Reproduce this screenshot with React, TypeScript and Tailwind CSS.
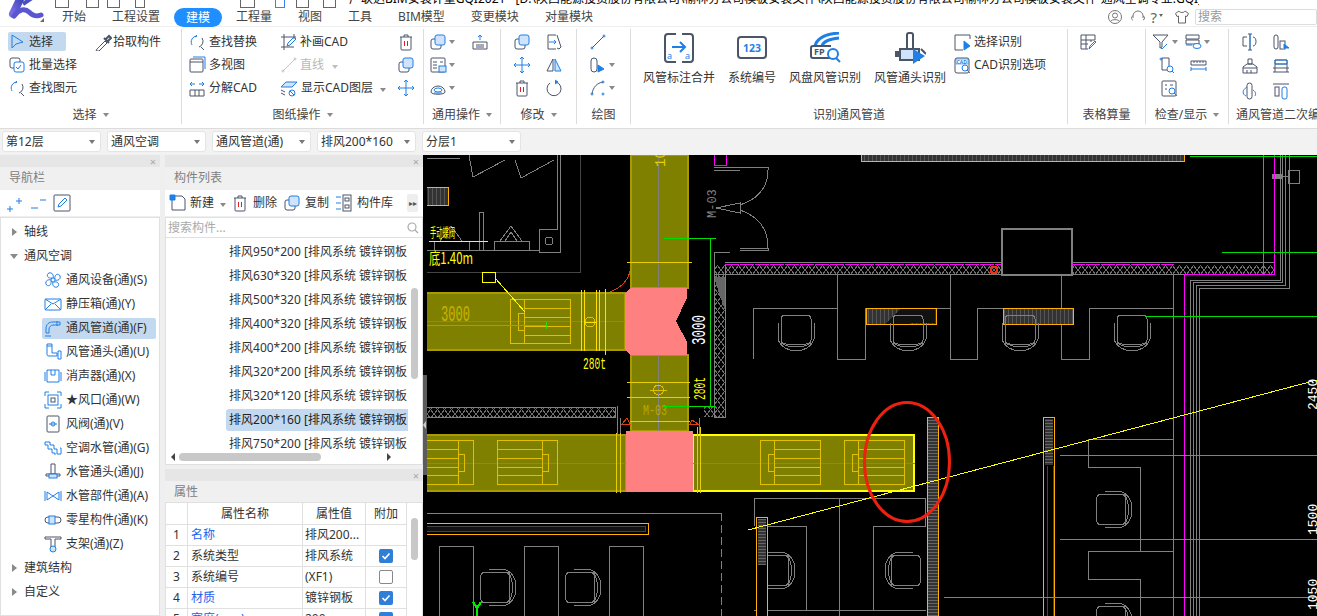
import { type ReactNode } from 'react'

const D = '#4a5568'
const B = '#1e7fe6'
const L = '#cfe3fb'

const icons: Record<string, ReactNode> = {
  select: <path d="M4 2v13l4-4 7-2z" stroke={B} />,
  pick: <><path d="M3 16l8-8 2 2-8 8-3 0z" stroke={D} /><path d="M10 5l5 5M12 6l3-3 2 2-3 3" stroke={D} strokeWidth="2" /><path d="M3 16l3-3" stroke={B} /></>,
  batch: <><rect x="2" y="2" width="10" height="10" rx="2" stroke={D} /><rect x="6" y="6" width="10" height="10" rx="2" stroke={B} fill="#fff" /><path d="M8 11l2 2 3-4" stroke={B} /></>,
  find: <><path d="M4 12a6 6 0 0 1 5-9l-1-1M9 3l-2 1" stroke={B} /><path d="M14 5a6 6 0 0 1-3 9" stroke={D} /><path d="M13 14l3 3" stroke={D} /></>,
  patch: <><path d="M4 1v16M1 4h15M14 14H1M14 1v5" stroke={D} /><path d="M7 13l1-3 6-6 2 2-6 6z" stroke={B} /></>,
  trash: <><path d="M3 4h12M7 4V2h4v2M4 4v12a1 1 0 0 0 1 1h8a1 1 0 0 0 1-1V4" stroke={D} /><path d="M7.500 8v5M10.500 8v5" stroke="#e02020" /></>,
  line: <><path d="M3 15L15 3" stroke="#c4c4c4" /><circle cx="3" cy="15" r="1" stroke="#c4c4c4" /><circle cx="15" cy="3" r="1" stroke="#c4c4c4" /></>,
  copy: <><rect x="2" y="6" width="10" height="10" rx="2" stroke={D} /><rect x="6" y="2" width="10" height="10" rx="2" stroke={B} fill={L} /></>,
  view: <><rect x="2" y="3" width="13" height="13" rx="1" stroke={D} /><path d="M2 6h13" stroke={D} /><path d="M5 1h12v12" stroke={B} /></>,
  explode: <><path d="M2 11h14v6H2zM7 11v6M11 11v6" stroke={D} /><path d="M7 5H2M2 5l2-2M2 5l2 2M11 5h5M16 5l-2-2M16 5l-2 2" stroke={B} /></>,
  layers: <><path d="M1 8l5-5h11l-5 5z" stroke={B} fill={L} /><path d="M1 11l4 2M1 14l4 2" stroke={D} /><circle cx="12" cy="14" r="3" stroke={B} /><path d="M10 12l4 4" stroke={B} /></>,
  move: <path d="M9 1v16M1 9h16M7 3l2-2 2 2M7 15l2 2 2-2M3 7L1 9l2 2M15 7l2 2-2 2" stroke={B} />,
  form: <><rect x="2" y="2" width="14" height="14" rx="1" stroke={D} /><path d="M4 6h4M4 9h4M4 12h4M11 6h3" stroke={D} /><rect x="10" y="10" width="7" height="6" stroke={B} fill={L} /></>,
  cloud: <><path d="M2 13a7 6 0 0 1 14 0c0 3-14 3-14 0z" stroke={D} /><ellipse cx="9" cy="11" rx="4" ry="2" stroke={B} /><path d="M5 14h8" stroke={B} /></>,
  upload: <><path d="M2 9h14v7H2zM5 12h8M5 14h8" stroke={D} /><path d="M9 7V2M7 4l2-2 2 2" stroke={B} /></>,
  extend: <><path d="M11 2H3v14h8" stroke={D} /><path d="M12 2l4 12-2 2-2-1" stroke={D} /><path d="M4 9h7M9 7l2 2-2 2" stroke={B} /></>,
  mirror: <><path d="M8 3v12H2z" stroke={D} /><path d="M10 3v12h6z" stroke={B} fill={L} /></>,
  rotate: <><path d="M5 4a7 7 0 1 0 6-1" stroke={D} /><path d="M10 1l3 2-3 2" fill={B} stroke={B} /></>,
  segment: <><path d="M3 15L15 3" stroke={D} /><circle cx="3" cy="15" r="1" stroke={B} /><circle cx="15" cy="3" r="1" stroke={B} /></>,
  rectTool: <><rect x="2" y="2" width="6" height="14" rx="3" stroke={D} /><path d="M9 9l6 4-6 3z" fill={B} stroke={B} /></>,
  arc: <><path d="M3 15C4 8 8 4 14 3" stroke={D} /><circle cx="3" cy="15" r="1" stroke={B} /><circle cx="14" cy="3" r="1" stroke={B} /><circle cx="14" cy="15" r="1" stroke={B} /></>,
  pickArea: <><path d="M17 6V2H2v15h8" stroke={D} /><path d="M11 8v9l6-4z" fill={B} stroke={B} /></>,
  cadOpt: <><rect x="2" y="2" width="14" height="15" rx="2" stroke={D} /><rect x="3" y="3" width="12" height="5" fill="#fff" stroke={B} strokeWidth=".6" /><text x="3.500" y="7.500" fontSize="5" fill={B} stroke="none" fontWeight="700">CAD</text><circle cx="12" cy="12" r="3" stroke={B} fill="#fff" /><path d="M14 14l3 3" stroke={B} /></>,
  table: <><path d="M2 2h14v5H2zM2 7v9h7M7 2v14M2 11h7M12 7v2" stroke={D} /><path d="M10 16l1-3 5-5 1 1-5 5z" stroke={B} /></>,
  filter: <><path d="M1 2h15l-6 7v5l-2 1V9z" stroke={D} /><path d="M8 14l2 2 5-5" stroke={B} /></>,
  eye: <><path d="M2 2h13v4H2zM2 7h13v4H2z" stroke={D} /><path d="M2 12h6" stroke={B} /><ellipse cx="13" cy="13" rx="4" ry="2.500" stroke={B} fill="#fff" /></>,
  pathFind: <><path d="M4 2h7v12H4z" stroke={D} /><circle cx="3" cy="3" r="1" stroke={B} /><circle cx="12" cy="13" r="3" stroke={B} fill="#fff" /><path d="M14 15l2 2" stroke={B} /></>,
  ruler: <><path d="M2 5h15v4H2z" stroke={D} /><path d="M5 5v2M8 5v2M11 5v2M14 5v2" stroke={D} /><path d="M2 13h15M2 11v4M17 11v4" stroke={B} /></>,
  dataFind: <><rect x="2" y="2" width="14" height="15" rx="1" stroke={D} /><path d="M5 6h2M10 6h3M5 10h2" stroke={D} /><circle cx="12" cy="12" r="3" stroke={B} fill="#fff" /><path d="M14 14l3 3" stroke={B} /></>,
  split: <><path d="M6 4H2v9h4M12 4c4 0 4 9 0 9M9 1v16M7 1h4M7 17h4" stroke={D} /><path d="M9 1v16" stroke={B} /></>,
  tall: <><rect x="2" y="2" width="4" height="14" rx="2" stroke={D} /><rect x="8" y="8" width="5" height="8" stroke={D} /><path d="M12 11l5 4h-5z" fill={B} stroke={B} /></>,
  brush: <><path d="M7 2h4v5H7zM2 10l4-3h6l4 3v6H2zM2 11h14M6 16v-3M10 16v-3" stroke={D} /></>,
  bench: <><path d="M3 3h12v4H3zM3 15V7M15 15V7M1 15h16M1 11h16" stroke={D} /><path d="M3 3h12v4H3z" stroke={B} /></>,
  pipe: <><rect x="6" y="1" width="5" height="16" rx="2.500" stroke={D} /><path d="M6 5C1 8 1 12 5 14" stroke={B} /><path d="M12 8c3 2 3 4 2 6" stroke={B} /></>,
  pillar: <><path d="M1 2h16" stroke={D} /><rect x="3" y="5" width="4" height="9" stroke={D} /><rect x="10" y="5" width="5" height="12" rx="2" stroke={B} /></>,
  fan: <><circle cx="9" cy="9" r="2" stroke={B} /><path d="M8 7C3 8 2 3 5 2s5 2 4 5M11 8c-1-5 4-6 5-3s-2 5-5 4M10 11c5-1 6 4 3 5s-5-2-4-5M7 10c1 5-4 6-5 3s2-5 5-4" stroke={B} /></>,
  box: <><rect x="1" y="4" width="16" height="11" rx="1" stroke={B} /><path d="M1 4l8 5 8-5M1 15l6-6M17 15l-6-6" stroke={B} /></>,
  duct: <><path d="M2 14v-4c0-5 3-7 7-7h7v3H9c-2 0-4 2-4 4v4zM1 17h6M13 2v5" stroke={B} /></>,
  elbow: <><path d="M3 1h5v9h5v3H5c-2 0-2-1-2-2zM3 3h5M14 8h3v8h-3z" stroke={B} /></>,
  silencer: <><path d="M1 5v9M17 5v9M3 3h12v12H3zM7 3v5h4V3" stroke={B} /></>,
  outlet: <><path d="M1 5V1h4M13 1h4v4M17 13v4h-4M5 17H1v-4" stroke={B} /><rect x="4" y="4" width="10" height="10" stroke={B} /><rect x="7" y="7" width="4" height="4" stroke={D} /></>,
  valve: <><rect x="3" y="1" width="12" height="16" rx="1" stroke={D} /><path d="M5 9h8" stroke={B} /><circle cx="9" cy="9" r="2" stroke={B} /></>,
  water: <path d="M1 3h5v3h4v4h3v5h4V9h-1M1 3v3h3v4h4v4h3v2" stroke={B} />,
  tee: <><path d="M7 1h4v10H7z" stroke={D} /><path d="M2 11h14v2H2z" stroke={D} /><rect x="5" y="11" width="8" height="4" fill={L} stroke={B} /></>,
  valve2: <><path d="M1 4v10M17 4v10M3 5l12 8V5L3 13z" stroke={B} /></>,
  misc: <><rect x="1" y="6" width="16" height="6" rx="3" stroke={D} /><rect x="5" y="5" width="6" height="8" fill={L} stroke={B} /></>,
  stand: <><path d="M1 2h16M1 2v2h6v8M17 2v2h-6v8" stroke={D} /><circle cx="9" cy="14" r="3" fill={L} stroke={B} /></>,
  plus: <><path d="M2 15h6M5 12v6" stroke={B} /><path d="M11 7h6M14 4v6" stroke={B} /></>,
  minus: <><path d="M2 14h7M11 6h6" stroke={B} /></>,
  edit: <><rect x="1" y="1" width="16" height="16" rx="1" stroke={D} /><path d="M5 13l1-3 6-6 2 2-6 6z" stroke={B} /></>,
  newFile: <><path d="M3 6v10h13V5l-3-3H6" stroke={D} /><path d="M1 1h5v5H1z" fill={B} stroke={B} /></>,
  library: <><rect x="8" y="1" width="8" height="16" stroke={D} /><rect x="10" y="4" width="4" height="3" stroke={D} /><rect x="10" y="11" width="4" height="3" stroke={D} /><path d="M1 3h5M1 9h5M1 15h5" stroke={B} /></>,
}

function Ic({ n }: { n: string }) {
  return (
    <svg width="18" height="18" viewBox="0 0 18 18" fill="none" strokeWidth="1" className="shrink-0">
      {icons[n]}
    </svg>
  )
}

function Caret({ light }: { light?: boolean }) {
  return (
    <span
      className={`inline-block h-0 w-0 border-x-[3.500px] border-t-[4px] border-x-transparent ${light ? 'border-t-[#c0c0c0]' : 'border-t-[#8a8a8a]'}`}
    />
  )
}

function Group({ w, label, caret, children }: { w: string; label: string; caret?: boolean; children: ReactNode }) {
  return (
    <div className={`flex h-[95px] shrink-0 flex-col overflow-hidden border-r border-[#dcdcdc] ${w}`}>
      <div className="h-[75px] pt-px">{children}</div>
      <div className="flex h-5 items-center justify-center gap-[6px] whitespace-nowrap pt-[2px] text-[#444]">
        {label}
        {caret && <Caret />}
      </div>
    </div>
  )
}

function Tool({ n, t, gap = 'gap-[3px]' }: { n: string; t: string; gap?: string }) {
  return (
    <div className={`flex h-[23px] items-center whitespace-nowrap ${gap}`}>
      <Ic n={n} />
      <span>{t}</span>
    </div>
  )
}

function Only({ n, caret }: { n: string; caret?: boolean }) {
  return (
    <div className="flex h-[23px] items-center gap-[2px]">
      <Ic n={n} />
      {caret && <Caret />}
    </div>
  )
}

function Big({ w, t, children }: { w: string; t: string; children: ReactNode }) {
  return (
    <div className={`flex flex-col items-center whitespace-nowrap ${w}`}>
      <svg width="32" height="32" viewBox="0 0 32 32" fill="none" className="mt-[2px]">
        {children}
      </svg>
      <span className="mt-[6px] leading-4">{t}</span>
    </div>
  )
}

function PanelHead({ t }: { t: string }) {
  return (
    <>
      <div className="flex h-3 items-center justify-end bg-[#e6e6e6] pr-[4px] text-[11px] leading-none text-[#a8a8a8]">×</div>
      <div className="flex h-[22px] items-center bg-[#f0f0f0] pl-[9px] text-[#808080]">{t}</div>
    </>
  )
}

const navItems = [
  ['fan', '通风设备(通)(S)'],
  ['box', '静压箱(通)(Y)'],
  ['duct', '通风管道(通)(F)'],
  ['elbow', '风管通头(通)(U)'],
  ['silencer', '消声器(通)(X)'],
  ['outlet', '★风口(通)(W)'],
  ['valve', '风阀(通)(V)'],
  ['water', '空调水管(通)(G)'],
  ['tee', '水管通头(通)(J)'],
  ['valve2', '水管部件(通)(A)'],
  ['misc', '零星构件(通)(K)'],
  ['stand', '支架(通)(Z)'],
]

const listRows = ['950*200', '630*320', '500*320', '400*320', '400*200', '320*200', '320*120', '200*160', '750*200']

const propRows = [
  ['1', '名称', '排风200...', '', true],
  ['2', '系统类型', '排风系统', 'on', false],
  ['3', '系统编号', '(XF1)', 'off', false],
  ['4', '材质', '镀锌钢板', 'on', true],
  ['5', '宽度(mm)', '200', 'on', true],
] as const

function TreeHead({ t, open }: { t: string; open?: boolean }) {
  return (
    <div className="flex h-6 items-center pl-[9px]">
      <span className="flex w-2 justify-center">
        {open ? (
          <span className="h-0 w-0 border-x-[4px] border-t-[5px] border-x-transparent border-t-[#8a8a8a]" />
        ) : (
          <span className="h-0 w-0 border-y-[4px] border-l-[5px] border-y-transparent border-l-[#8a8a8a]" />
        )}
      </span>
      <span className="ml-[6px]">{t}</span>
    </div>
  )
}

function Check({ on }: { on: boolean }) {
  return on ? (
    <span className="flex h-[14px] w-[14px] items-center justify-center rounded-[2px] bg-[#2f7fd8]">
      <svg width="10" height="10" viewBox="0 0 10 10" fill="none" stroke="#fff" strokeWidth="1.600">
        <path d="M1.500 5l2.500 2.500 4.500-5" />
      </svg>
    </span>
  ) : (
    <span className="h-[14px] w-[14px] rounded-[2px] border border-[#888] bg-white" />
  )
}

function Vent({ x, flip }: { x: number; flip?: boolean }) {
  // 风口 symbol, 60 wide, sits on the lower duct run
  const inner = flip ? x + 45 : x + 14
  const box = flip ? x + 45 : x + 8
  return (
    <g stroke="#e0c000" fill="none">
      <rect x={x} y={440} width={60} height={44} />
      <path d={`M${inner} 440V484`} />
      <rect x={box} y={454} width={6} height={17} />
      {[449, 458, 467, 475].map((y) => (
        <path key={y} d={flip ? `M${x} ${y}H${x + 45}` : `M${x + 14} ${y}H${x + 60}`} />
      ))}
    </g>
  )
}

function Chair({ x, y, r = 0 }: { x: number; y: number; r?: number }) {
  return (
    <g transform={`translate(${x} ${y}) rotate(${r} 18 17.500)`} stroke="#808080" fill="none">
      <path d="M3 4Q3 0 8 0H28Q33 0 33 4V25Q33 29 28 29H8Q3 29 3 25Z" />
      <path d="M0 8V24Q2 32 12 35H24Q34 32 36 24V8M3 28Q10 32 18 32T33 28" />
    </g>
  )
}

function Canvas() {
  const grey = '#808080'
  const ol = '#808000'
  const rim = '#a89a00'
  return (
    <svg viewBox="427 155 890 461" width="890" height="461" className="block bg-black" shapeRendering="crispEdges" fontFamily="'Liberation Mono', monospace">
      <defs>
        <pattern id="wall" width="7" height="9" patternUnits="userSpaceOnUse">
          <path d="M0 0L3.500 4.500L7 0M0 9L3.500 4.500L7 9" stroke="#6e6e6e" fill="none" />
        </pattern>
        <pattern id="hatch" width="4" height="4" patternUnits="userSpaceOnUse">
          <rect width="4" height="4" fill="#333" />
          <path d="M0 0V4" stroke="#555" />
        </pattern>
        <pattern id="hatchH" width="4" height="3" patternUnits="userSpaceOnUse">
          <rect width="4" height="3" fill="#333" />
          <path d="M0 0H4" stroke="#666" />
        </pattern>
      </defs>

      {/* upper left room */}
      <g stroke={grey} fill="none">
        <path d="M423 158H460M469 155L473 177L505 160M515 160L521 178L554 160" />
        <path d="M560 155V252H539V229H557V155M423 250H539M479 250V212H483V250" />
        <circle cx="549" cy="241" r="4" />
        <path d="M494 250V241H529V250M500 241L511 226L522 241M505 241L511 232L517 241M434 250V241H469V250M440 241L451 226L462 241" />
        <path d="M580 155V272H423" stroke="#444" />
      </g>
      <rect x="420" y="187" width="28" height="18" fill="url(#hatch)" stroke="#ffb000" />
      <path d="M429 241H488" stroke="#ffff00" />
      <text x="430" y="237" fontSize="13" fill="#ffff00" textLength="25" lengthAdjust="spacingAndGlyphs" fontFamily="'Noto Sans CJK SC', sans-serif">手动蝶阀</text>
      <text x="429" y="264" fontSize="16" fill="#ffff00" textLength="44" lengthAdjust="spacingAndGlyphs" fontFamily="'Noto Sans CJK SC', sans-serif">底1.40m</text>

      {/* door and walls */}
      <g stroke={grey} fill="none">
        <path d="M714 167H740M714 170H740M740 167H768V170C768 190 755 200 740 205M740 210C755 215 768 225 768 248V250H740M740 248H768" />
        <path d="M716 208L740 203V213Z" />
      </g>
      <text transform="translate(716 218) rotate(-90)" fontSize="12" fill={grey}>M-03</text>
      <path d="M714 155V165H726V155" stroke="#ff00ff" fill="none" />
      <rect x="714" y="265" width="287" height="9" fill="url(#wall)" />
      <rect x="1071" y="265" width="204" height="9" fill="url(#wall)" />
      <rect x="714" y="265" width="11" height="152" fill="url(#wall)" />
      <path d="M714 277H725V311Z" fill="#666" />
      <rect x="423" y="407" width="192" height="10" fill="url(#wall)" />
      <rect x="704" y="406" width="21" height="11" fill="url(#wall)" />
      <g stroke={grey} fill="none">
        <path d="M725 262H1001M1071 262H1275M714 274H1275M423 407H615V417H423M617 406V458M620 418V458M699 418V458M702 406H704M714 252H730M714 252V417H725V265" />
        <rect x="1001.500" y="228.500" width="70" height="46" strokeWidth="2" />
      </g>
      <path d="M725 264H1001M1071 264H1174" stroke="#ff00ff" strokeDasharray="14 1" />
      <circle cx="994" cy="270" r="3.500" stroke="#f03010" strokeWidth="2" fill="none" />

      {/* top hatched unit and right risers */}
      <rect x="861.500" y="150" width="323" height="11.500" fill="url(#hatch)" stroke="#ffb000" />
      <g stroke={grey} fill="none">
        <path d="M1263 155V274M1280 155V280H1190.500V616M1282.500 155V282.700H1193.500V616M1285 155V285.700H1196.500V616M1289 155V288.300H1199V616" />
        <rect x="1288.500" y="170.500" width="11" height="13" />
        <path d="M1283 176.500H1288" />
      </g>
      <rect x="1272" y="174" width="11" height="5" fill={grey} />
      <path d="M1274.500 155V274H1184.500V616" stroke="#ff00ff" fill="none" />

      {/* office desks */}
      <g stroke={grey} fill="none">
        <path d="M753 359V308H837.500V274M837.500 308V359H865.500V308H950V274M950 308V359H977V308H1061V274M1061 308V359H1089V308H1173.500V274M1173.500 308V616" />
      </g>
      <rect x="866.500" y="308.500" width="70" height="16" fill="url(#hatch)" stroke="#ffb000" />
      <path d="M885 324L900 309H935V323Z" fill="#111" />
      <rect x="1003.500" y="308.500" width="70" height="16" fill="url(#hatch)" stroke="#ffb000" />
      <Chair x={778} y={315} />
      <Chair x={890} y={315} />
      <Chair x={1002} y={315} />
      <Chair x={1114} y={315} />

      {/* lower offices */}
      <g stroke={grey} fill="none">
        <path d="M423 513H721" />
        <path d="M721 513V616" strokeDasharray="8 4" />
        <path d="M439 616V546H473V616M524 616V546H558V616M609 616V546H643V616M423 570V605" />
        <path d="M754 526V498H925.500V526H873V610M925.500 610H754M839.500 498V616M767.600 526H806V610" />
        <path d="M1173.500 439H1088.500V467H1140.500V551H1088.500V579H1140.500V616M1140.500 551H1173.500" />
      </g>
      <rect x="423" y="523.500" width="225" height="11" stroke="#ffb000" fill="none" />
      <rect x="423" y="526.500" width="222" height="5" stroke="#444" fill="#111" />
      <Chair x={480} y={570} r={270} />
      <Chair x={565} y={570} r={270} />
      <Chair x={759} y={553} r={270} />
      <Chair x={885} y={553} r={90} />
      <Chair x={1096} y={492} r={270} />
      <Chair x={1096} y={604} r={270} />
      <rect x="927.500" y="417.500" width="11" height="205" fill="url(#hatchH)" stroke="#ffb000" />
      <rect x="1043.500" y="417.500" width="11" height="205" fill="#000" stroke="#ffb000" />
      <rect x="1045" y="419" width="8" height="46" fill="url(#hatchH)" />
      <path d="M1047 466V616M1053 466V616" stroke="#444" />
      <rect x="756.500" y="517.500" width="11" height="105" fill="#000" stroke="#ffb000" />
      <rect x="758" y="519" width="8" height="46" fill="url(#hatchH)" />

      {/* ducts */}
      <rect x="631" y="155" width="57" height="133" fill={ol} stroke={rim} strokeWidth="2" />
      <rect x="631" y="355" width="57" height="76" fill={ol} stroke={rim} strokeWidth="2" />
      <rect x="420" y="293" width="205" height="57" fill={ol} stroke={rim} strokeWidth="2" />
      <rect x="420" y="435" width="206" height="56" fill={ol} stroke={rim} strokeWidth="2" />
      <rect x="693" y="435" width="221" height="56" fill={ol} stroke="#ffff00" strokeWidth="2" />
      <polygon points="631,288 687,288 687,298 676,321 687,342 687,355 631,355 625,350 625,293" fill="#ff8080" />
      <rect x="626" y="431" width="67" height="61" fill="#ff8080" />
      <path d="M658.500 155V288M658.500 355V431M423 321.500H625M423 463.500H626M693 463.500H915" stroke={grey} />
      <path d="M627 262.500H692M627 382.500H690M627 397.500H690M630 421.500H690" stroke="#e6d000" />
      <path d="M616 433V493M620 433V493M697 427V493M700 427V493" stroke="#e6d000" />

      {/* symbols on ducts */}
      <g stroke="#e0c000" fill="none">
        <rect x="510" y="299" width="60" height="44" />
        <path d="M524 299V343M524 308H570M524 317H570M524 326H570M524 335H570" />
        <rect x="518" y="313" width="6" height="17" />
        <circle cx="590" cy="322" r="5" />
      </g>
      <path d="M581 290V351M584 290V351M596 290V351M599 290V351M605 289V355M584 322H596" stroke="#ffe000" />
      <rect x="482" y="272" width="13" height="10" stroke="#ffff00" fill="none" />
      <path d="M495 278L525 312" stroke="#ffff00" />
      <Vent x={413} flip />
      <Vent x={497} flip />
      <Vent x={760} />
      <Vent x={844} />
      <g stroke="#e0c000" fill="none">
        <circle cx="658.500" cy="390" r="5" />
        <path d="M650 390H667" />
      </g>
      <path d="M423 325.500H546M546 322V329" stroke="#33dd00" />
      <text x="441" y="321" fontSize="22" fill="#c8b400" textLength="29" lengthAdjust="spacingAndGlyphs">3000</text>
      <text x="643" y="415" fontSize="14" fill="#b8a800" textLength="24" lengthAdjust="spacingAndGlyphs">M-03</text>
      <text transform="translate(665 167) rotate(-90)" fontSize="14" fill="#e6d000">10</text>

      {/* dimensions */}
      <path d="M664 238.500H716M710.500 238V407M664 406.500H715" stroke="#00dd00" />
      <text transform="translate(705 345) rotate(-90)" fontSize="20" fill="#fff" textLength="30" lengthAdjust="spacingAndGlyphs">3000</text>
      <text x="583" y="369" fontSize="16" fill="#ffff00" textLength="23" lengthAdjust="spacingAndGlyphs">280t</text>
      <text transform="translate(705 400) rotate(-90)" fontSize="16" fill="#ffff00" textLength="23" lengthAdjust="spacingAndGlyphs">280t</text>
      <path d="M610 292C620 288 628 281 630 271" stroke="#e04010" fill="none" />
      <path d="M627 418L622 424H630ZM690 424H698L692 420Z" fill="#000" stroke="#e04010" />

      <path d="M1190 156.500H1317M1222 252.500H1317M1145.600 316.500H1317M1060 455.500H1317M1060 539.500H1317M944 597.500H1317" stroke="#00dd00" />
      <path d="M748 530L1317 380" stroke="#ffff00" />
      <text transform="translate(1317 410) rotate(-90)" fontSize="13" fill="#fff">2450</text>
      <text transform="translate(1317 535) rotate(-90)" fontSize="13" fill="#fff">1500</text>
      <text transform="translate(1317 610) rotate(-90)" fontSize="13" fill="#fff">1050</text>
      <path d="M473 602L477 608L481 602M477 608V616" stroke="#00ee00" strokeWidth="2" fill="none" />
      <ellipse cx="907" cy="462" rx="42.500" ry="59.500" fill="none" stroke="#ee2010" strokeWidth="3" shapeRendering="auto" />
    </svg>
  )
}

export default function App() {
  return (
    <div className="relative flex h-[616px] w-[1317px] flex-col overflow-hidden bg-white font-['Noto_Sans','Noto_Sans_CJK_SC',sans-serif] text-[12px] text-[#333]">
      {/* clipped title bar */}
      <div className="flex h-2 items-end overflow-hidden">
        <div className="flex w-[349px] shrink-0 items-end pl-[55px]">
          <span className="mr-[17px] h-3 w-[14px] border border-[#666]" />
          <span className="mr-2 h-3 w-[13px] border border-[#666]" />
          <span className="mr-[15px] h-3 w-[13px] border border-[#666]" />
          <span className="mr-[95px] h-3 w-[10px] border border-[#666]" />
          <span className="mr-5 h-3 w-[15px] border border-[#666]" />
          <span className="mr-[11px] h-3 w-[10px] border border-[#3b82f6]" />
          <span className="mr-[14px] h-3 w-[13px] border border-[#666]" />
          <span className="h-3 w-[13px] border border-[#666]" />
        </div>
        <div className="h-2 w-[850px] overflow-hidden whitespace-nowrap leading-none text-black">
          <div className="-mt-[7px]">广联达BIM安装计量GQI2021 - [D:\陕西能源投资股份有限公司\榆林分公司模板安装文件\陕西能源投资股份有限公司榆林分公司模板安装文件-通风空调专业.GQI]</div>
        </div>
      </div>

      {/* tabs */}
      <div className="flex h-[19px] items-center border-b border-[#eee] pl-[62px] text-[#444]">
        <div className="flex gap-[26px]">
          <span>开始</span>
          <span>工程设置</span>
          <span className="-mx-[12px] h-[19px] rounded-[10px] bg-[#1f8fff] px-3 leading-[19px] text-white">建模</span>
          <span>工程量</span>
          <span>视图</span>
          <span>工具</span>
          <span>BIM模型</span>
          <span>变更模块</span>
          <span>对量模块</span>
        </div>
        <div className="ml-auto flex items-center">
          <svg width="16" height="16" viewBox="0 0 16 16" fill="none" stroke="#777">
            <circle cx="8" cy="8" r="6.500" />
            <circle cx="8" cy="6.500" r="2.500" />
            <path d="M3.500 12.500c1-2.500 8-2.500 9 0" />
          </svg>
          <svg width="16" height="16" viewBox="0 0 16 16" fill="none" stroke="#777" className="ml-[7px]">
            <path d="M3 9V7a5 5 0 0 1 10 0v2" />
            <path d="M3 7c-2 0-2 4 0 4M13 7c2 0 2 4 0 4" />
          </svg>
          <span className="ml-[4px] text-[15px] leading-none text-[#666]">?</span>
          <span className="ml-[2px] mb-1 h-0 w-0 border-x-[2px] border-t-[3px] border-x-transparent border-t-[#666]" />
          <svg width="16" height="16" viewBox="0 0 16 16" fill="none" stroke="#666" className="ml-[11px]">
            <path d="M5 2L1.500 4.500 3 7.500 4.500 7V14H11.500V7L13 7.500 14.500 4.500 11 2C10 4 6 4 5 2Z" />
          </svg>
          <div className="ml-[5px] h-4 w-[122px] rounded-[2px] border border-[#ddd] pl-[2px] leading-[14px] text-[#999]">搜索</div>
        </div>
      </div>

      {/* ribbon */}
      <div className="flex h-[101px] pt-[2px]">
        <Group w="w-[182px]" label="选择" caret>
          <div className="grid grid-cols-[94px_88px]">
            <div className="ml-2 flex h-[23px] items-center">
              <div className="flex h-[19px] w-[58px] items-center gap-[3px] rounded-[2px] bg-[#c3d9f0]">
                <Ic n="select" />
                <span>选择</span>
              </div>
            </div>
            <Tool n="pick" t="拾取构件" gap="gap-px" />
            <div className="col-span-2 pl-2"><Tool n="batch" t="批量选择" /></div>
            <div className="col-span-2 pl-2"><Tool n="find" t="查找图元" /></div>
          </div>
        </Group>
        <Group w="w-[242px]" label="图纸操作" caret>
          <div className="grid grid-cols-[92px_117px_1fr] pl-[6px]">
            <Tool n="find" t="查找替换" />
            <Tool n="patch" t="补画CAD" gap="gap-[2px]" />
            <Only n="trash" />
            <Tool n="view" t="多视图" />
            <div className="flex h-[23px] items-center gap-[2px] text-[#b8b8b8]">
              <Ic n="line" />
              <span>直线</span>
              <span className="ml-[6px]"><Caret light /></span>
            </div>
            <Only n="copy" />
            <Tool n="explode" t="分解CAD" />
            <div className="flex h-[23px] items-center gap-[3px] whitespace-nowrap">
              <Ic n="layers" />
              <span>显示CAD图层</span>
              <span className="ml-[4px]"><Caret /></span>
            </div>
            <Only n="move" />
          </div>
        </Group>
        <Group w="w-[77px]" label="通用操作" caret>
          <div className="grid grid-cols-[42px_1fr] pl-[5px]">
            <Only n="copy" caret />
            <Only n="upload" />
            <Only n="form" caret />
            <div />
            <Only n="cloud" caret />
          </div>
        </Group>
        <Group w="w-[76px]" label="修改" caret>
          <div className="grid grid-cols-[32px_1fr] pl-3">
            <Only n="copy" />
            <Only n="extend" />
            <Only n="move" />
            <Only n="mirror" />
            <Only n="trash" />
            <Only n="rotate" />
          </div>
        </Group>
        <Group w="w-[54px]" label="绘图">
          <div className="pl-3">
            <Only n="segment" />
            <Only n="rectTool" caret />
            <Only n="arc" caret />
          </div>
        </Group>
        <Group w="w-[437px]" label="识别通风管道">
          <div className="flex pl-3">
            <Big w="w-[72px]" t="风管标注合并">
              <path d="M13 2H5a3 3 0 0 0-3 3v22a3 3 0 0 0 3 3h8M19 2h8a3 3 0 0 1 3 3v22a3 3 0 0 1-3 3h-8" stroke={D} strokeWidth="2" />
              <path d="M9 15h13M17 10l5 5-5 5" stroke={B} strokeWidth="2" />
              <text x="4" y="27" fontSize="9" fill={B} fontFamily="'Noto Sans', sans-serif">a</text>
              <text x="22" y="27" fontSize="9" fill={B} fontFamily="'Noto Sans', sans-serif">a</text>
            </Big>
            <Big w="ml-[13px] w-[48px]" t="系统编号">
              <rect x="2" y="5" width="28" height="21" rx="3" stroke={D} strokeWidth="2" />
              <text x="16" y="20" fontSize="10.500" fontWeight="700" fill={B} textAnchor="middle" fontFamily="'Noto Sans', sans-serif">123</text>
            </Big>
            <Big w="ml-[13px] w-[72px]" t="风盘风管识别">
              <path d="M6 14C8 6 15 2 30 1M13 14C14 10 20 7 30 6" stroke={B} strokeWidth="3" />
              <path d="M24 26H4a2 2 0 0 1-2-2V16a2 2 0 0 1 2-2h18" stroke={D} strokeWidth="2" />
              <text x="5" y="23" fontSize="9" fontWeight="700" fill={D} fontFamily="'Noto Sans', sans-serif">FP</text>
              <circle cx="24" cy="22" r="5" stroke={B} strokeWidth="2" fill="#fff" />
              <path d="M27 26l4 4" stroke={B} strokeWidth="2" />
            </Big>
            <Big w="ml-[13px] w-[72px]" t="风管通头识别">
              <path d="M13 18V3a2 2 0 0 1 2-2h2a2 2 0 0 1 2 2v15" stroke={D} strokeWidth="2" />
              <rect x="1" y="19" width="4" height="6" fill={D} />
              <rect x="6" y="17" width="19" height="11" fill={L} stroke={D} strokeWidth="2" />
              <path d="M19 17v15l12-8z" fill={B} />
              <path d="M27 17l5 5" stroke={D} strokeWidth="2" />
            </Big>
            <div className="ml-[7px]">
              <Tool n="pickArea" t="选择识别" />
              <Tool n="cadOpt" t="CAD识别选项" />
            </div>
          </div>
        </Group>
        <Group w="w-[78px]" label="表格算量">
          <div className="pl-[11px]"><Only n="table" /></div>
        </Group>
        <Group w="w-[83px]" label="检查/显示" caret>
          <div className="pl-[6px]">
            <div className="flex">
              <div className="w-[32px]"><Only n="filter" caret /></div>
              <Only n="eye" caret />
            </div>
            <div className="flex pl-[6px]">
              <div className="w-[31px]"><Only n="pathFind" /></div>
              <Only n="ruler" />
            </div>
            <div className="pl-2"><Only n="dataFind" /></div>
          </div>
        </Group>
        <div className="flex h-[95px] w-[88px] shrink-0 flex-col overflow-hidden">
          <div className="grid h-[75px] grid-cols-[31px_1fr] pl-3 pt-px">
            <Only n="split" />
            <Only n="tall" />
            <Only n="brush" />
            <Only n="bench" />
            <Only n="pipe" />
            <Only n="pillar" />
          </div>
          <div className="flex h-5 items-center whitespace-nowrap pl-[7px] pt-[2px] text-[#444]">通风管道二次编辑</div>
        </div>
      </div>

      {/* floor selectors */}
      <div className="flex h-[27px] gap-[6px] border-t border-[#dcdcdc] bg-[#f2f2f2] pl-[2px] pt-[2px]">
        {['第12层', '通风空调', '通风管道(通)', '排风200*160', '分层1'].map((t) => (
          <div key={t} className="flex h-[21px] w-[99px] items-center justify-between rounded-[3px] border border-[#e4e4e4] bg-white pl-[3px] pr-[5px]">
            <span>{t}</span>
            <span className="h-0 w-0 border-x-[3px] border-t-[4px] border-x-transparent border-t-[#777]" />
          </div>
        ))}
      </div>

      {/* panels + canvas */}
      <div className="flex h-[461px] bg-[#efefef]">
        <div className="flex w-[160px] shrink-0 flex-col">
          <PanelHead t="导航栏" />
          <div className="mt-px flex h-[26px] items-center gap-[6px] bg-white pl-[5px]">
            <Ic n="plus" />
            <Ic n="minus" />
            <Ic n="edit" />
          </div>
          <div className="mt-px flex-1 overflow-hidden border border-[#e0e0e0] bg-white pt-[2px]">
            <TreeHead t="轴线" />
            <TreeHead t="通风空调" open />
            {navItems.map(([ic, t]) => (
              <div key={t} className="flex h-6 items-center pl-[43px]">
                <div className={`-ml-[2px] flex h-[21px] w-[114px] items-center gap-[4px] rounded-[2px] whitespace-nowrap pl-[2px] ${t.startsWith('通风管道') ? 'bg-[#c3d9f0]' : ''}`}>
                  <Ic n={ic} />
                  <span>{t}</span>
                </div>
              </div>
            ))}
            <TreeHead t="建筑结构" />
            <TreeHead t="自定义" />
          </div>
        </div>

        <div className="ml-[5px] flex w-[258px] shrink-0 flex-col">
          <PanelHead t="构件列表" />
          <div className="mt-px flex h-[26px] items-center bg-white pl-[4px] whitespace-nowrap">
            <Ic n="newFile" />
            <span className="ml-[3px]">新建</span>
            <span className="ml-[6px]"><Caret /></span>
            <span className="ml-[5px]"><Ic n="trash" /></span>
            <span className="ml-[4px]">删除</span>
            <span className="ml-[6px]"><Ic n="copy" /></span>
            <span className="ml-[4px]">复制</span>
            <span className="ml-[6px]"><Ic n="library" /></span>
            <span className="ml-[4px]">构件库</span>
            <span className="ml-[14px] flex h-[18px] w-[11px] items-center justify-center rounded-[2px] bg-[#eee] text-[8px] text-[#555]">▸▸</span>
          </div>
          <div className="mt-px flex h-5 items-center justify-between border-x border-t border-[#e0e0e0] bg-white pl-[2px] pr-[3px] text-[#aaa]">
            <span>搜索构件...</span>
            <svg width="12" height="12" viewBox="0 0 12 12" fill="none" stroke="#aaa" strokeWidth="1.200">
              <circle cx="5" cy="5" r="4" />
              <path d="M8 8l3 3" />
            </svg>
          </div>
          <div className="relative h-[228px] border border-[#e0e0e0] bg-white pl-[60px] pt-[2px]">
            {listRows.map((t) => (
              <div key={t} className={`flex h-6 w-[182px] items-center overflow-hidden whitespace-nowrap ${t === '200*160' ? 'text-[#222]' : ''}`}>
                <div className={`flex h-[22px] w-full items-center rounded-l-[3px] pl-[3px] ${t === '200*160' ? 'bg-[#c3d9f0]' : ''}`}>
                  排风{t} [排风系统 镀锌钢板
                </div>
              </div>
            ))}
            {/* scrollbars */}
            <div className="absolute left-[245px] top-[50px] h-[91px] w-[7px] rounded-[4px] bg-[#c8c8c8]" />
            <div className="absolute bottom-px left-0 flex h-[12px] w-[244px] items-center bg-white">
              <span className="ml-[5px] h-0 w-0 border-y-[4px] border-r-[4px] border-y-transparent border-r-[#444]" />
              <div className="ml-[4px] h-[8px] w-[142px] rounded-[4px] bg-[#c8c8c8]" />
              <span className="ml-auto mr-[19px] h-0 w-0 border-y-[4px] border-l-[4px] border-y-transparent border-l-[#444]" />
            </div>
          </div>

          <div className="mt-[4px] flex h-3 items-center justify-end bg-[#e6e6e6] pr-[4px] text-[11px] leading-none text-[#a8a8a8]">×</div>
          <div className="flex h-[21px] items-center bg-[#f0f0f0] pl-[9px] text-[#808080]">属性</div>
          <div className="relative flex-1 overflow-hidden border-x border-t border-[#e0e0e0] bg-white">
            <div className="grid w-[241px] grid-cols-[22px_115px_63px_41px]">
              {['', '属性名称', '属性值', '附加'].map((t, i) => (
                <div key={i} className="flex h-[22px] items-center justify-center border-b border-r border-[#e0e0e0]">{t}</div>
              ))}
              {propRows.map(([n, name, val, chk, blue]) => (
                <div key={n} className="contents">
                  <div className="flex h-[21px] items-center justify-center border-b border-r border-[#e0e0e0]">{n}</div>
                  <div className={`flex h-[21px] items-center border-b border-r border-[#e0e0e0] pl-[3px] ${blue ? 'text-[#2563eb]' : ''}`}>{name}</div>
                  <div className="flex h-[21px] items-center overflow-hidden whitespace-nowrap border-b border-r border-[#e0e0e0] pl-[2px]">{val}</div>
                  <div className="flex h-[21px] items-center justify-center border-b border-r border-[#e0e0e0]">
                    {chk && <Check on={chk === 'on'} />}
                  </div>
                </div>
              ))}
            </div>
            <div className="absolute left-[245px] top-[15px] h-[42px] w-[7px] rounded-[4px] bg-[#c8c8c8]" />
          </div>
        </div>

        {/* splitter between the panels and the drawing */}
        <div className="flex h-full w-1 shrink-0 flex-col bg-black">
          <div className="mt-[220px] flex h-[100px] items-center bg-[#5c5c5c]">
            <span className="h-0 w-0 border-y-[4px] border-r-[3px] border-y-transparent border-r-[#ccc]" />
          </div>
        </div>

        <div className="shrink-0 overflow-hidden">
          <Canvas />
        </div>
      </div>

      {/* logo over the title bar */}
      <svg width="40" height="26" viewBox="0 0 40 26" fill="none" className="absolute left-[6px] top-0">
        <defs>
          <linearGradient id="logo" x1="0" y1="1" x2="1" y2="0">
            <stop offset="0" stopColor="#7a6ae0" />
            <stop offset="1" stopColor="#3c46b8" />
          </linearGradient>
        </defs>
        <path d="M7 14L15 -3" stroke="url(#logo)" strokeWidth="8" strokeLinecap="round" />
        <path d="M8 16C13 9 19 8 23 12C27 16 30 17 35 15" stroke="#5a55d0" strokeWidth="5" strokeLinecap="round" />
        <path d="M17 4L26 -2" stroke="#4a50c4" strokeWidth="4" />
        <path d="M38 18V22H34Z" fill="#666" />
      </svg>
    </div>
  )
}
